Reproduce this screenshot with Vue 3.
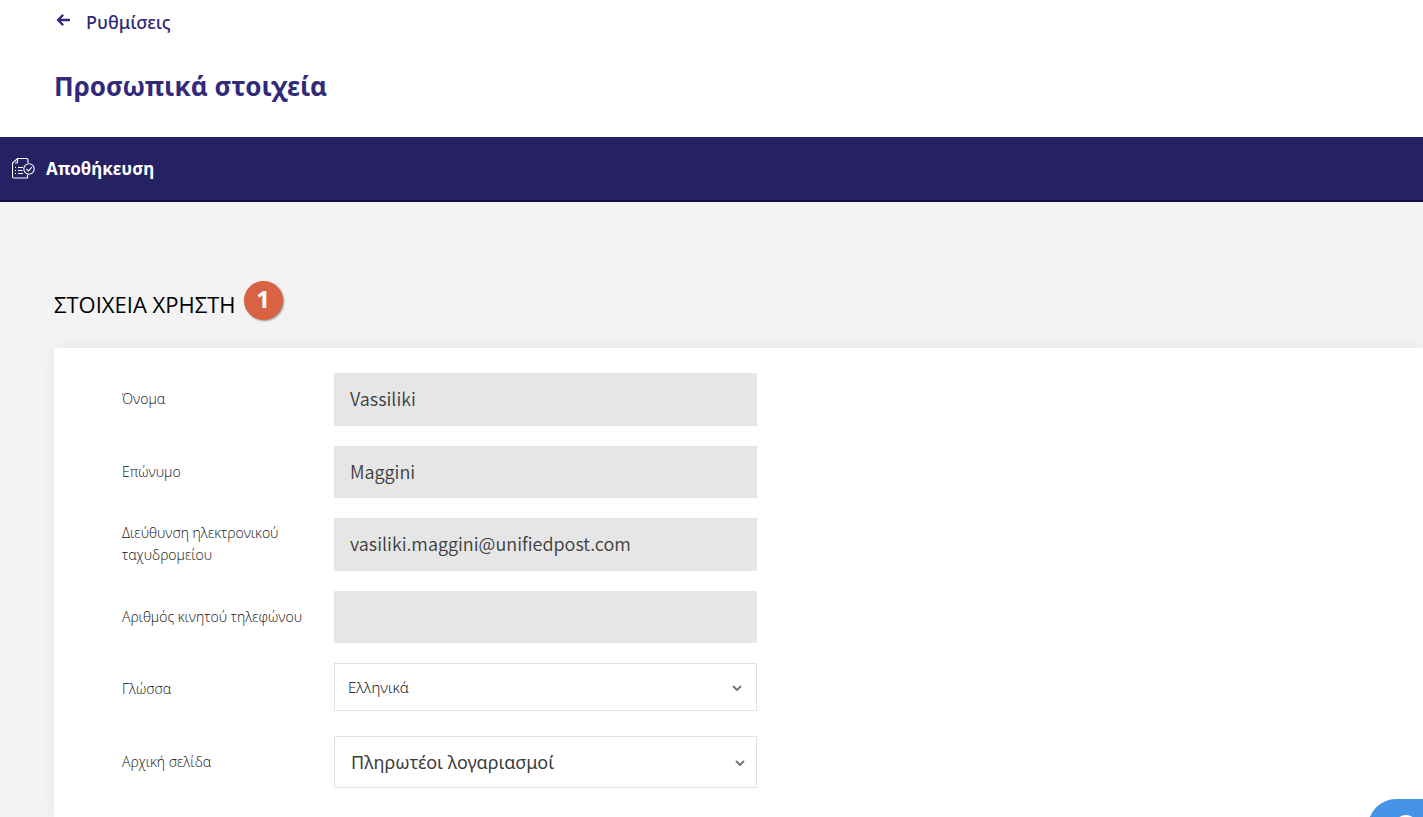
<script setup>
import { ref } from 'vue'

const fields = [
  { id: 'first-name', label: 'Όνομα', value: 'Vassiliki' },
  { id: 'last-name', label: 'Επώνυμο', value: 'Maggini' },
  { id: 'email', label: 'Διεύθυνση ηλεκτρονικού ταχυδρομείου', value: 'vasiliki.maggini@unifiedpost.com' },
  { id: 'mobile', label: 'Αριθμός κινητού τηλεφώνου', value: '' }
]
const language = ref('Ελληνικά')
const startPage = ref('Πληρωτέοι λογαριασμοί')
</script>

<template>
  <div class="page">
    <header class="header">
      <a class="back" href="#">
        <svg class="back-icon" viewBox="0 0 16 14" aria-hidden="true">
          <path d="M14.500 7H3.500M8 2.500L3.500 7 8 11.500" />
        </svg>
        <span>Ρυθμίσεις</span>
      </a>
      <h1>Προσωπικά στοιχεία</h1>
    </header>

    <nav class="toolbar">
      <button class="save" type="button">
        <svg class="save-icon" viewBox="0 0 24 22" aria-hidden="true">
          <path d="M16 5V2Q16 .5 14.500 .5H5.500L.5 5v13.500Q.5 20 2 20H15.500V16.500M5.500 .5V4Q5.500 5 4.500 5H3" />
          <path d="M6 9.500h5M6 12.500h4.500M6 15.500h5M3 9.500h1M3 12.500h1M3 15.500h1" />
          <circle cx="17" cy="11" r="5.200" />
          <path d="M14.500 11l2 2 3.300-3.800" />
        </svg>
        <span>Αποθήκευση</span>
      </button>
    </nav>

    <main class="content">
      <div class="section-title">
        <h2>ΣΤΟΙΧΕΙΑ ΧΡΗΣΤΗ</h2>
        <span class="step">1</span>
      </div>
      <form class="card" @submit.prevent>
        <div v-for="f in fields" :key="f.id" class="row">
          <label :for="f.id">{{ f.label }}</label>
          <input :id="f.id" class="field" type="text" :value="f.value" readonly />
        </div>
        <div class="row">
          <label for="language">Γλώσσα</label>
          <div class="select-box compact">
            <select id="language" v-model="language">
              <option>Ελληνικά</option>
            </select>
            <svg class="chevron" viewBox="0 0 10 6" aria-hidden="true"><path d="M1 1l4 4 4-4" /></svg>
          </div>
        </div>
        <div class="row">
          <label for="start-page">Αρχική σελίδα</label>
          <div class="select-box">
            <select id="start-page" v-model="startPage">
              <option>Πληρωτέοι λογαριασμοί</option>
            </select>
            <svg class="chevron" viewBox="0 0 10 6" aria-hidden="true"><path d="M1 1l4 4 4-4" /></svg>
          </div>
        </div>
      </form>
    </main>

    <button class="help" type="button" aria-label="Βοήθεια">
      <svg viewBox="0 0 24 24" aria-hidden="true">
        <circle cx="12" cy="12" r="11" />
        <path d="M9 9.500a3 3 0 1 1 3 3.500v2M12 17v1" />
      </svg>
    </button>
  </div>
</template>

<style>
body {
  background: #f3f3f3;
  overflow: hidden;
}
</style>

<style scoped>
.page {
  min-height: 100vh;
  display: flex;
  flex-direction: column;
  font-family: "Open Sans", "Noto Sans", sans-serif;
  color: #111;
}
.header {
  height: 137px;
  box-sizing: border-box;
  padding: 8px 54px 0;
  background: #fff;
  color: #31297a;
}
.back {
  display: flex;
  gap: 15px;
  color: inherit;
  text-decoration: none;
  font: 500 18px/28px "Noto Sans", sans-serif;
}
.back-icon {
  width: 17px;
  height: 14px;
  margin-top: 5px;
  fill: none;
  stroke: currentColor;
  stroke-width: 2.4;
  stroke-linecap: round;
  stroke-linejoin: round;
}
h1 {
  margin: 32px 0 0;
  font: 700 26px/36px "Noto Sans", sans-serif;
}
.toolbar {
  height: 65px;
  box-sizing: border-box;
  background: #262163;
  border-bottom: 2px solid #150f45;
  display: flex;
}
.save {
  border: 0;
  padding: 0 12px;
  background: none;
  color: #fff;
  display: flex;
  align-items: center;
  gap: 10px;
  font: 700 17px/24px "Noto Sans", sans-serif;
}
.save-icon {
  width: 24px;
  height: 22px;
  fill: none;
  stroke: currentColor;
  stroke-width: 1.1;
}
.content {
  flex: 1;
  display: flex;
  flex-direction: column;
  padding: 79px 0 0 54px;
}
.section-title {
  display: flex;
  align-items: center;
  gap: 8px;
}
h2 {
  margin: 6px 0 0;
  font: 400 22px/32px "Open Sans", sans-serif;
  color: #000;
}
.step {
  width: 39px;
  height: 39px;
  border-radius: 50%;
  background: #d96243;
  box-shadow: 1px 1px 2px rgba(0, 0, 0, 0.4);
  color: #fff;
  font: 700 24px/36px "Open Sans", sans-serif;
  text-align: center;
}
.card {
  flex: 1;
  display: flex;
  flex-direction: column;
  gap: 20px;
  margin-top: 28px;
  padding: 25px 68px 29px;
  background: #fff;
  border-radius: 4px 0 0 0;
  box-shadow: 0 0 16px rgba(0, 0, 0, 0.06);
}
.row {
  display: grid;
  grid-template-columns: 192px 423px;
  column-gap: 20px;
  height: 53px;
}
.row:nth-child(even) {
  height: 52px;
}
.row label {
  align-self: center;
  padding-bottom: 1px;
  font-size: 14px;
  font-weight: 300;
  line-height: 22px;
}
.field,
.select-box select {
  box-sizing: border-box;
  width: 100%;
  height: 100%;
  border: 0;
  border-radius: 0;
  outline: 0;
  padding: 0 16px;
  color: #3c3c3c;
}
.field {
  padding-bottom: 3px;
  background: #e6e6e6;
  font: 350 18px/26px "Noto Sans CJK JP", "Noto Sans", sans-serif;
}
.select-box {
  position: relative;
}
.select-box select {
  appearance: none;
  background: #fff;
  border: 1px solid #e3e3e3;
  font: 400 18px/26px "Noto Sans", sans-serif;
}
.compact {
  height: 48px;
}
.compact select {
  padding: 0 13px;
  font: 300 15px/26px "Open Sans", "Noto Sans", sans-serif;
  color: #000;
}
.chevron {
  position: absolute;
  right: 12px;
  top: 50%;
  width: 10px;
  height: 6px;
  margin-top: -2px;
  fill: none;
  stroke: #777;
  stroke-width: 2;
  pointer-events: none;
}
.compact .chevron {
  right: 15px;
}
.help {
  position: fixed;
  right: -65px;
  bottom: -38px;
  width: 120px;
  height: 56px;
  border: 0;
  border-radius: 28px;
  padding: 0 26px;
  background: #4693e8;
  display: flex;
  align-items: center;
}
.help svg {
  width: 24px;
  height: 24px;
  fill: none;
  stroke: #fff;
  stroke-width: 2;
}
</style>
